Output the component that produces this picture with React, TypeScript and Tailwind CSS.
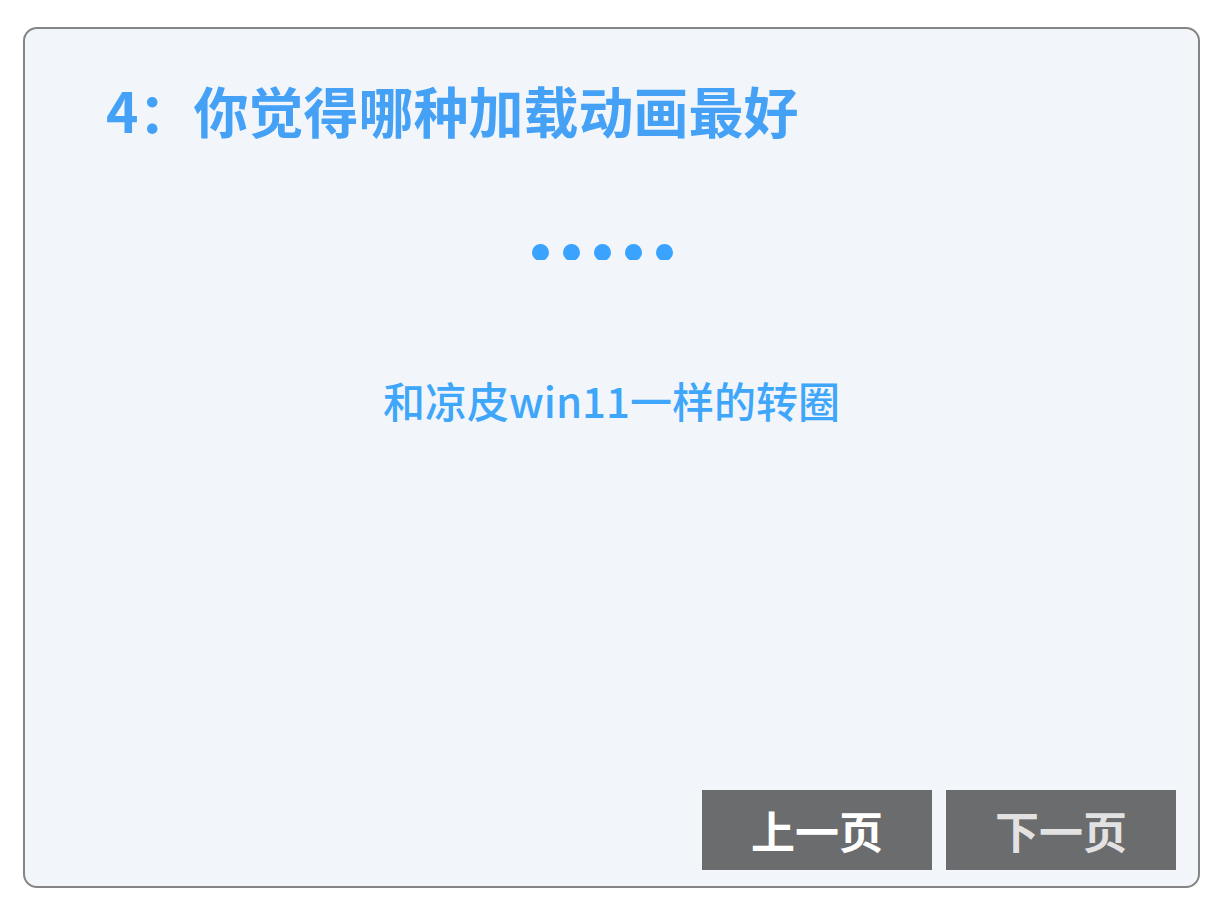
import React from "react";

export default function App() {
  const font = { fontFamily: '"Noto Sans CJK SC", "Noto Sans", sans-serif' };
  return (
    <div className="min-h-screen bg-white pt-[27px] pl-[23px]" style={font}>
      <div className="w-[1177px] h-[861px] border-2 border-[#858585] rounded-[14px] bg-[#f2f6fa] flex flex-col">
        <h1 className="mt-[53px] ml-[81px] text-[55px] font-bold text-[#45a1f6] leading-none tracking-[0px]">
          4：你觉得哪种加载动画最好
        </h1>
        <div className="mt-[107px] flex justify-center mr-[18px]">
          <div className="flex gap-[14px] h-[16px] overflow-hidden">
            {[0, 1, 2, 3, 4].map((i) => (
              <span key={i} className="block w-[17px] h-[17px] rounded-full bg-[#3aa3ff]" />
            ))}
          </div>
        </div>
        <p className="mt-[119px] text-center text-[42px] leading-none text-[#3ea6fb] font-medium">
          和凉皮win11一样的转圈
        </p>
        <div className="flex-1" />
        <div className="flex justify-end gap-[14px] pr-[22px] pb-[16px]">
          <button className="w-[230px] h-[80px] bg-[#6b6c6e] text-white text-[44px] font-bold leading-none flex items-center justify-center">
            上一页
          </button>
          <button className="w-[230px] h-[80px] bg-[#6b6c6e] text-[#e2e2e2] text-[44px] font-bold leading-none flex items-center justify-center">
            下一页
          </button>
        </div>
      </div>
    </div>
  );
}
